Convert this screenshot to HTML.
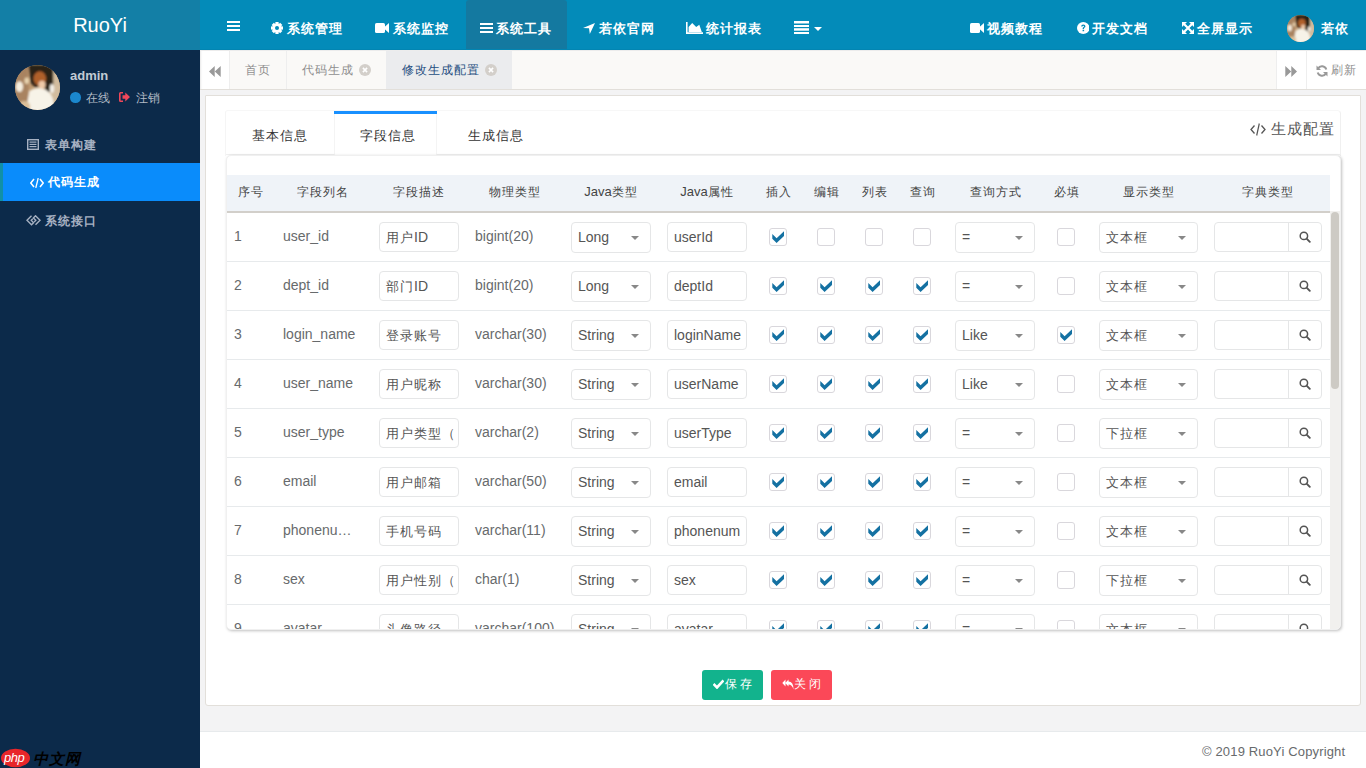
<!DOCTYPE html>
<html><head><meta charset="utf-8"><style>
*{box-sizing:border-box;margin:0;padding:0}
html,body{width:1366px;height:768px;overflow:hidden;font-family:"Liberation Sans",sans-serif;font-size:14px;color:#676a6c;background:#f3f3f4}
i{font-style:normal}
.a{position:absolute}
.c{font-size:13px;letter-spacing:1px;font-weight:500}
.c13{font-size:12px;letter-spacing:1px;font-weight:500}
.c12{font-size:11px;letter-spacing:1px;font-weight:500}
#logo{left:0;top:0;width:200px;height:50px;background:#137fa6;color:#fff;font-size:20px;text-align:center;line-height:50px}
#side{left:0;top:50px;width:200px;height:718px;background:#0c2a4a}
#nav{left:200px;top:0;width:1166px;height:50px;background:#038bb9;border-bottom:1px solid #0285b2}
#tabs{left:200px;top:50px;width:1166px;height:40px;background:#faf9f7;border-bottom:1px solid #e2dfda;border-top:1px solid #ececec}
#panel{left:205px;top:95px;width:1156px;height:611px;background:#fff;border:1px solid #e2dfda;border-radius:1px 1px 3px 3px}
#footer{left:200px;top:731px;width:1166px;height:37px;background:#fff;border-top:1px solid #e7eaec}
.nt{position:absolute;top:22px;height:14px;line-height:14px;color:#fff;font-weight:bold;font-size:13px;letter-spacing:1px;white-space:nowrap}
.mt{position:absolute;height:14px;line-height:14px;color:#a7b1c2;font-weight:bold;font-size:12px;letter-spacing:1px;white-space:nowrap}
.tt{position:absolute;top:12px;height:14px;line-height:14px;color:#8f8f8f;font-size:12px;letter-spacing:1px;white-space:nowrap}
.td{position:absolute;height:16px;line-height:16px;white-space:nowrap;color:#676a6c}
.inp{position:absolute;height:30px;border:1px solid #e5e6e7;border-radius:4px;background:#fff;overflow:hidden;white-space:nowrap;color:#555;padding-left:6px;line-height:28px}
.sel{position:absolute;height:31px;border:1px solid #e5e6e7;border-radius:4px;background:#fff;white-space:nowrap;color:#555;padding-left:6px;line-height:29px}
.car{position:absolute;top:13px;width:0;height:0;border-left:4px solid transparent;border-right:4px solid transparent;border-top:4px solid #888}
.cb{position:absolute;width:18px;height:18px;border:1px solid #d9d7dc;border-radius:3px;background:#fff}
.cb svg{position:absolute;left:-1px;top:-1px}
.th{position:absolute;top:0;height:36px;line-height:36px;text-align:center;color:#444;white-space:nowrap;font-size:13px}
</style></head><body>
<div id="logo" class="a">RuoYi</div>
<div id="side" class="a">
<svg class="a" style="left:15px;top:15px" width="45" height="45" viewBox="0 0 100 100"><defs><clipPath id="cpa"><circle cx="50" cy="50" r="50"/></clipPath><filter id="bla" x="-20%" y="-20%" width="140%" height="140%"><feGaussianBlur stdDeviation="2.5"/></filter></defs><g clip-path="url(#cpa)"><rect width="100" height="100" fill="#c09a72"/><g filter="url(#bla)"><rect x="-5" y="0" width="35" height="110" fill="#a98360"/><rect x="75" y="0" width="30" height="110" fill="#d2bc9e"/><ellipse cx="10" cy="48" rx="8" ry="12" fill="#f6eedf"/><ellipse cx="26" cy="35" rx="5" ry="7" fill="#e8d4b0"/><path d="M30 0 H85 V60 L70 60 L62 45 L45 50 L35 40 Z" fill="#2b2017"/><ellipse cx="55" cy="30" rx="14" ry="16" fill="#b0602c"/><ellipse cx="60" cy="44" rx="8" ry="9" fill="#efc9a8"/><ellipse cx="82" cy="52" rx="5" ry="10" fill="#f4efe6"/><path d="M32 58 Q45 48 60 52 Q78 56 84 75 L90 110 H22 Z" fill="#f7f3e8"/><ellipse cx="20" cy="92" rx="14" ry="12" fill="#dcc09a"/></g></g></svg>
<span class="a" style="left:70px;top:18px;font-size:13px;font-weight:bold;color:#c2cbd4;line-height:16px">admin</span>
<div class="a" style="left:70px;top:42px;width:10.5px;height:10.5px;border-radius:50%;background:#1b87cd"></div>
<span class="mt" style="left:86px;top:41px;font-weight:normal;font-size:12px;letter-spacing:0;color:#b3bcc6">在线</span>
<svg class="a" style="left:119px;top:42px" width="11" height="10" viewBox="0 0 11 10"><path d="M0 1.5 Q0 0 1.5 0 H4 V1.6 H1.6 V8.4 H4 V10 H1.5 Q0 10 0 8.5 Z" fill="#f0475a"/><path d="M3.5 3.3 H6.3 V0.6 L11 5 L6.3 9.4 V6.7 H3.5 Z" fill="#f0475a"/></svg>
<span class="mt" style="left:136px;top:41px;font-weight:normal;font-size:12px;letter-spacing:0;color:#b3bcc6">注销</span>
<div class="a" style="left:0;top:113px;width:200px;height:38px;background:#0a8cfb"></div>
<div class="a" style="left:0;top:113px;width:3px;height:38px;background:#1190a6"></div>
<svg class="a" style="left:27px;top:89px" width="12" height="11" viewBox="0 0 12 11"><rect x="0.7" y="0.7" width="10.6" height="9.6" fill="none" stroke="#a7b1c2" stroke-width="1.4"/><rect x="2.5" y="2.5" width="7" height="1.2" fill="#a7b1c2"/><rect x="2.5" y="4.8" width="7" height="1.2" fill="#a7b1c2"/><rect x="2.5" y="7" width="7" height="1.2" fill="#a7b1c2"/></svg>
<span class="mt" style="left:45px;top:88px">表单构建</span>
<svg class="a" style="left:30px;top:128px" width="14" height="10" viewBox="0 0 14 10"><path d="M4 1 L0.8 5 L4 9" fill="none" stroke="#fff" stroke-width="1.5"/><path d="M10 1 L13.2 5 L10 9" fill="none" stroke="#fff" stroke-width="1.5"/><path d="M8.2 0 L5.8 10" fill="none" stroke="#fff" stroke-width="1.3"/></svg>
<span class="mt" style="left:48px;top:125px;color:#fff">代码生成</span>
<svg class="a" style="left:26px;top:165px" width="15" height="11" viewBox="0 0 15 11"><path d="M5.5 0.8 L1 5.3 L5.5 9.8 L7.6 7.7 L5.2 5.3 L6.8 3.7" fill="none" stroke="#a7b1c2" stroke-width="1.4"/><path d="M9.5 9.8 L14 5.3 L9.5 0.8 L7.4 2.9 L9.8 5.3 L8.2 6.9" fill="none" stroke="#a7b1c2" stroke-width="1.4"/></svg>
<span class="mt" style="left:45px;top:164px">系统接口</span>
<svg class="a" style="left:0px;top:698px" width="84" height="20" viewBox="0 0 84 20"><ellipse cx="15.5" cy="10" rx="14.5" ry="9.3" fill="#e8262a"/><text x="4" y="13.5" font-family="Liberation Sans" font-style="italic" font-size="13" fill="#fff" letter-spacing="-0.5">php</text></svg>
<span class="a" style="left:33px;top:700px;font-size:15px;line-height:18px;color:#000;font-style:italic;font-weight:bold;letter-spacing:1px">中文网</span>
</div>
<div id="nav" class="a">
<svg class="a" style="left:27px;top:21px" width="13" height="10"><rect x="0" y="0" width="13" height="2" fill="#fff"/><rect x="0" y="4" width="13" height="2" fill="#fff"/><rect x="0" y="8" width="13" height="2" fill="#fff"/></svg>
<svg class="a" style="left:71px;top:22px" width="12" height="12" viewBox="0 0 12 12"><g fill="#fff" transform="translate(6 6)"><rect x="-1.6" y="-6" width="3.2" height="12"/><rect x="-1.6" y="-6" width="3.2" height="12" transform="rotate(45)"/><rect x="-1.6" y="-6" width="3.2" height="12" transform="rotate(90)"/><rect x="-1.6" y="-6" width="3.2" height="12" transform="rotate(135)"/><circle r="4.6"/></g><circle cx="6" cy="6" r="2" fill="#038bb9"/></svg>
<span class="nt" style="left:87px">系统管理</span>
<svg class="a" style="left:175px;top:23px" width="14" height="10" viewBox="0 0 14 10"><rect x="0" y="0" width="10" height="10" rx="1.6" fill="#fff"/><path d="M9.5 4 L14 0 V10 L9.5 6 Z" fill="#fff"/></svg>
<span class="nt" style="left:193px">系统监控</span>
<div class="a" style="left:266px;top:0;width:101px;height:49px;background:#1479a0;border-radius:3px 3px 0 0"></div>
<svg class="a" style="left:280px;top:23px" width="13" height="10"><rect x="0" y="0" width="13" height="2" fill="#fff"/><rect x="0" y="4" width="13" height="2" fill="#fff"/><rect x="0" y="8" width="13" height="2" fill="#fff"/></svg>
<span class="nt" style="left:296px">系统工具</span>
<svg class="a" style="left:383px;top:23px" width="12" height="11" viewBox="0 0 12 11"><path d="M12 0 L0 5 L6 5.2 L6.8 11 Z" fill="#fff"/></svg>
<span class="nt" style="left:399px">若依官网</span>
<svg class="a" style="left:486px;top:22px" width="17" height="12" viewBox="0 0 17 12"><path d="M0 0 H1.6 V10.3 H17 V12 H0 Z M2.6 10 V5 L6.2 1 L10.2 5 L13.3 2.8 L15.8 10 Z" fill="#fff"/></svg>
<span class="nt" style="left:506px">统计报表</span>
<svg class="a" style="left:594px;top:21px" width="15" height="13"><rect x="0" y="0" width="15" height="2.5" fill="#fff"/><rect x="0" y="4" width="15" height="2" fill="#fff"/><rect x="0" y="7.2" width="15" height="2.5" fill="#fff"/><rect x="0" y="11" width="15" height="2" fill="#fff"/></svg>
<svg class="a" style="left:614px;top:27px" width="8" height="4"><path d="M0 0 H8 L4 4 Z" fill="#fff"/></svg>
<svg class="a" style="left:770px;top:23px" width="14" height="10" viewBox="0 0 14 10"><rect x="0" y="0" width="10" height="10" rx="1.6" fill="#fff"/><path d="M9.5 4 L14 0 V10 L9.5 6 Z" fill="#fff"/></svg>
<span class="nt" style="left:787px">视频教程</span>
<svg class="a" style="left:876.5px;top:22px" width="12.5" height="12" viewBox="0 0 13 13" preserveAspectRatio="none"><circle cx="6.5" cy="6.5" r="6.5" fill="#fff"/><path d="M4.3 5 Q4.3 2.7 6.6 2.7 Q8.8 2.7 8.8 4.6 Q8.8 5.7 7.6 6.3 Q7.3 6.5 7.3 7.6 H5.8 Q5.8 6 6.8 5.4 Q7.3 5.1 7.3 4.6 Q7.3 4 6.6 4 Q5.8 4 5.8 5 Z" fill="#038bb9"/><rect x="5.8" y="8.4" width="1.6" height="1.6" fill="#038bb9"/></svg>
<span class="nt" style="left:892px">开发文档</span>
<svg class="a" style="left:982px;top:22px" width="12" height="12" viewBox="0 0 12 12"><g fill="#fff"><path d="M0 0 H5 L0 5 Z"/><path d="M12 0 V5 L7 0 Z"/><path d="M0 12 V7 L5 12 Z"/><path d="M12 12 H7 L12 7 Z"/></g><path d="M1.5 1.5 L10.5 10.5 M10.5 1.5 L1.5 10.5" stroke="#fff" stroke-width="2.2"/></svg>
<span class="nt" style="left:997px">全屏显示</span>
<svg class="a" style="left:1087px;top:15px" width="27" height="27" viewBox="0 0 100 100"><defs><clipPath id="cpb"><circle cx="50" cy="50" r="50"/></clipPath><filter id="blb" x="-20%" y="-20%" width="140%" height="140%"><feGaussianBlur stdDeviation="3.5"/></filter></defs><g clip-path="url(#cpb)"><rect width="100" height="100" fill="#c09a72"/><g filter="url(#blb)"><rect x="-5" y="0" width="35" height="110" fill="#a98360"/><rect x="75" y="0" width="30" height="110" fill="#d2bc9e"/><ellipse cx="10" cy="48" rx="8" ry="12" fill="#f6eedf"/><ellipse cx="26" cy="35" rx="5" ry="7" fill="#e8d4b0"/><path d="M30 0 H85 V60 L70 60 L62 45 L45 50 L35 40 Z" fill="#2b2017"/><ellipse cx="55" cy="30" rx="14" ry="16" fill="#b0602c"/><ellipse cx="60" cy="44" rx="8" ry="9" fill="#efc9a8"/><ellipse cx="82" cy="52" rx="5" ry="10" fill="#f4efe6"/><path d="M32 58 Q45 48 60 52 Q78 56 84 75 L90 110 H22 Z" fill="#f7f3e8"/><ellipse cx="20" cy="92" rx="14" ry="12" fill="#dcc09a"/></g></g></svg>
<span class="nt" style="left:1121px">若依</span>
</div>
<div id="tabs" class="a">
<div class="a" style="left:0;top:0;width:30px;height:38px;background:#fff;border-right:1px solid #eee;box-shadow:inset 3px 0 2px -2px #e8e8e8"></div>
<svg class="a" style="left:9px;top:15px" width="12" height="11" viewBox="0 0 12 11"><path d="M0 5.5 L5.7 0 V11 Z M5.8 5.5 L11.7 0 V11 Z" fill="#999"/></svg>
<div class="a" style="left:86px;top:0;width:1px;height:38px;background:#eee"></div>
<span class="tt" style="left:45px">首页</span>
<span class="tt" style="left:102px">代码生成</span>
<svg class="a" style="left:159px;top:13px" width="12" height="12" viewBox="0 0 12 12"><circle cx="6" cy="6" r="6" fill="#d3cfca"/><path d="M3.9 3.9 L8.1 8.1 M8.1 3.9 L3.9 8.1" stroke="#fff" stroke-width="1.6"/></svg>
<div class="a" style="left:186px;top:0;width:126px;height:38px;background:#ebecee"></div>
<span class="tt" style="left:202px;color:#264e80">修改生成配置</span>
<svg class="a" style="left:285px;top:13px" width="12" height="12" viewBox="0 0 12 12"><circle cx="6" cy="6" r="6" fill="#d3cfca"/><path d="M3.9 3.9 L8.1 8.1 M8.1 3.9 L3.9 8.1" stroke="#fff" stroke-width="1.6"/></svg>
<div class="a" style="left:1076px;top:0;width:30px;height:38px;background:#fff;border-left:1px solid #eee"></div>
<svg class="a" style="left:1085px;top:15px" width="12" height="11" viewBox="0 0 12 11"><path d="M12 5.5 L6.3 0 V11 Z M6.2 5.5 L0.3 0 V11 Z" fill="#999"/></svg>
<div class="a" style="left:1106px;top:0;width:60px;height:38px;background:#fff;border-left:1px solid #eee"></div>
<svg class="a" style="left:1116px;top:14px" width="12" height="12" viewBox="0 0 12 12"><path d="M10.3 4.5 A4.6 4.6 0 0 0 2 3.5" fill="none" stroke="#999" stroke-width="2"/><path d="M1.7 7.5 A4.6 4.6 0 0 0 10 8.5" fill="none" stroke="#999" stroke-width="2"/><path d="M0.5 0.5 V5 H5 Z" fill="#999"/><path d="M11.5 11.5 V7 H7 Z" fill="#999"/></svg>
<span class="tt" style="left:1131px">刷新</span>
</div>
<div id="panel" class="a"></div>
<div class="a" style="left:225px;top:110px;width:1116px;height:46px;border-top:1px solid #f7f7f7;border-left:1px solid #f5f5f5;border-right:1px solid #f0f0f0;border-radius:3px 4px 0 0"></div>
<div class="a" style="left:226px;top:110px;width:108px;height:45px;border-bottom:1px solid #f0f0f0"></div>
<div class="a" style="left:437px;top:110px;width:903px;height:45px;border-bottom:1px solid #f0f0f0"></div>
<div class="a" style="left:334px;top:111px;width:103px;height:44px;border-left:1px solid #f4f4f4;border-right:1px solid #f4f4f4"></div>
<div class="a" style="left:334px;top:111px;width:103px;height:3px;background:#1890ff"></div>
<span class="a c" style="left:252px;top:129px;line-height:14px;color:#333">基本信息</span>
<span class="a c" style="left:360px;top:129px;line-height:14px;color:#333">字段信息</span>
<span class="a c" style="left:468px;top:129px;line-height:14px;color:#333">生成信息</span>
<svg class="a" style="left:1250px;top:123px" width="16" height="13" viewBox="0 0 16 13"><path d="M4.5 2.5 L1 6.5 L4.5 10.5 M11.5 2.5 L15 6.5 L11.5 10.5" fill="none" stroke="#555" stroke-width="1.3"/><path d="M9.3 0.5 L6.7 12.5" stroke="#555" stroke-width="1.2"/></svg>
<span class="a" style="left:1271px;top:121px;line-height:16px;color:#555;font-size:15px;letter-spacing:1px">生成配置</span>
<div class="a" style="left:226px;top:155px;width:1115px;height:475px;border-radius:5px;box-shadow:1px 1px 3px rgba(0,0,0,.25);border:1px solid #f0f0f0;overflow:hidden;background:#fff">
<div class="a" style="left:0;top:19px;width:1103px;height:38px;background:#eff3f8;border-bottom:2px solid #d2cfca"></div>
<span class="th" style="left:0px;top:18px;width:48px"><i class="c13">序号</i></span>
<span class="th" style="left:48px;top:18px;width:96px"><i class="c13">字段列名</i></span>
<span class="th" style="left:144px;top:18px;width:96px"><i class="c13">字段描述</i></span>
<span class="th" style="left:240px;top:18px;width:96px"><i class="c13">物理类型</i></span>
<span class="th" style="left:336px;top:18px;width:96px">Java<i class="c13">类型</i></span>
<span class="th" style="left:432px;top:18px;width:96px">Java<i class="c13">属性</i></span>
<span class="th" style="left:528px;top:18px;width:48px"><i class="c13">插入</i></span>
<span class="th" style="left:576px;top:18px;width:48px"><i class="c13">编辑</i></span>
<span class="th" style="left:624px;top:18px;width:48px"><i class="c13">列表</i></span>
<span class="th" style="left:672px;top:18px;width:48px"><i class="c13">查询</i></span>
<span class="th" style="left:720px;top:18px;width:97px"><i class="c13">查询方式</i></span>
<span class="th" style="left:817px;top:18px;width:46px"><i class="c13">必填</i></span>
<span class="th" style="left:863px;top:18px;width:117px"><i class="c13">显示类型</i></span>
<span class="th" style="left:980px;top:18px;width:122px"><i class="c13">字典类型</i></span>
<div class="a" style="left:0;top:105px;width:1103px;height:1px;background:#e7eaec"></div>
<span class="td" style="left:7px;top:72px">1</span>
<span class="td" style="left:56px;top:72px">user_id</span>
<div class="inp" style="left:152px;top:66px;width:80px"><i class="c">用户</i>ID</div>
<span class="td" style="left:248px;top:72px">bigint(20)</span>
<div class="sel" style="left:344px;top:66px;width:80px">Long<i class="car" style="left:59px"></i></div>
<div class="inp" style="left:440px;top:66px;width:80px">userId</div>
<div class="cb" style="left:542px;top:72px"><svg width="18" height="18" viewBox="0 0 18 18"><path d="M3.3 6.1 L7.6 10.3 L15 3.2 V7.9 L7.6 15 L3.3 10.7 Z" fill="#1471a2"/></svg></div>
<div class="cb" style="left:590px;top:72px"></div>
<div class="cb" style="left:638px;top:72px"></div>
<div class="cb" style="left:686px;top:72px"></div>
<div class="sel" style="left:728px;top:66px;width:80px">=<i class="car" style="left:59px"></i></div>
<div class="cb" style="left:830px;top:72px"></div>
<div class="sel" style="left:872px;top:66px;width:99px"><i class="c">文本框</i><i class="car" style="left:78px"></i></div>
<div class="inp" style="left:987px;top:66px;width:108px"></div>
<div class="a" style="left:1061px;top:66px;width:1px;height:30px;background:#e5e6e7"></div>
<svg class="a" style="left:1072px;top:75px" width="12" height="12" viewBox="0 0 12 12"><circle cx="4.9" cy="4.9" r="3.7" fill="none" stroke="#555" stroke-width="1.5"/><path d="M7.6 7.6 L10.8 10.8" stroke="#555" stroke-width="1.9" stroke-linecap="round"/></svg>
<div class="a" style="left:0;top:154px;width:1103px;height:1px;background:#e7eaec"></div>
<span class="td" style="left:7px;top:121px">2</span>
<span class="td" style="left:56px;top:121px">dept_id</span>
<div class="inp" style="left:152px;top:115px;width:80px"><i class="c">部门</i>ID</div>
<span class="td" style="left:248px;top:121px">bigint(20)</span>
<div class="sel" style="left:344px;top:115px;width:80px">Long<i class="car" style="left:59px"></i></div>
<div class="inp" style="left:440px;top:115px;width:80px">deptId</div>
<div class="cb" style="left:542px;top:121px"><svg width="18" height="18" viewBox="0 0 18 18"><path d="M3.3 6.1 L7.6 10.3 L15 3.2 V7.9 L7.6 15 L3.3 10.7 Z" fill="#1471a2"/></svg></div>
<div class="cb" style="left:590px;top:121px"><svg width="18" height="18" viewBox="0 0 18 18"><path d="M3.3 6.1 L7.6 10.3 L15 3.2 V7.9 L7.6 15 L3.3 10.7 Z" fill="#1471a2"/></svg></div>
<div class="cb" style="left:638px;top:121px"><svg width="18" height="18" viewBox="0 0 18 18"><path d="M3.3 6.1 L7.6 10.3 L15 3.2 V7.9 L7.6 15 L3.3 10.7 Z" fill="#1471a2"/></svg></div>
<div class="cb" style="left:686px;top:121px"><svg width="18" height="18" viewBox="0 0 18 18"><path d="M3.3 6.1 L7.6 10.3 L15 3.2 V7.9 L7.6 15 L3.3 10.7 Z" fill="#1471a2"/></svg></div>
<div class="sel" style="left:728px;top:115px;width:80px">=<i class="car" style="left:59px"></i></div>
<div class="cb" style="left:830px;top:121px"></div>
<div class="sel" style="left:872px;top:115px;width:99px"><i class="c">文本框</i><i class="car" style="left:78px"></i></div>
<div class="inp" style="left:987px;top:115px;width:108px"></div>
<div class="a" style="left:1061px;top:115px;width:1px;height:30px;background:#e5e6e7"></div>
<svg class="a" style="left:1072px;top:124px" width="12" height="12" viewBox="0 0 12 12"><circle cx="4.9" cy="4.9" r="3.7" fill="none" stroke="#555" stroke-width="1.5"/><path d="M7.6 7.6 L10.8 10.8" stroke="#555" stroke-width="1.9" stroke-linecap="round"/></svg>
<div class="a" style="left:0;top:203px;width:1103px;height:1px;background:#e7eaec"></div>
<span class="td" style="left:7px;top:170px">3</span>
<span class="td" style="left:56px;top:170px">login_name</span>
<div class="inp" style="left:152px;top:164px;width:80px"><i class="c">登录账号</i></div>
<span class="td" style="left:248px;top:170px">varchar(30)</span>
<div class="sel" style="left:344px;top:164px;width:80px">String<i class="car" style="left:59px"></i></div>
<div class="inp" style="left:440px;top:164px;width:80px">loginName</div>
<div class="cb" style="left:542px;top:170px"><svg width="18" height="18" viewBox="0 0 18 18"><path d="M3.3 6.1 L7.6 10.3 L15 3.2 V7.9 L7.6 15 L3.3 10.7 Z" fill="#1471a2"/></svg></div>
<div class="cb" style="left:590px;top:170px"><svg width="18" height="18" viewBox="0 0 18 18"><path d="M3.3 6.1 L7.6 10.3 L15 3.2 V7.9 L7.6 15 L3.3 10.7 Z" fill="#1471a2"/></svg></div>
<div class="cb" style="left:638px;top:170px"><svg width="18" height="18" viewBox="0 0 18 18"><path d="M3.3 6.1 L7.6 10.3 L15 3.2 V7.9 L7.6 15 L3.3 10.7 Z" fill="#1471a2"/></svg></div>
<div class="cb" style="left:686px;top:170px"><svg width="18" height="18" viewBox="0 0 18 18"><path d="M3.3 6.1 L7.6 10.3 L15 3.2 V7.9 L7.6 15 L3.3 10.7 Z" fill="#1471a2"/></svg></div>
<div class="sel" style="left:728px;top:164px;width:80px">Like<i class="car" style="left:59px"></i></div>
<div class="cb" style="left:830px;top:170px"><svg width="18" height="18" viewBox="0 0 18 18"><path d="M3.3 6.1 L7.6 10.3 L15 3.2 V7.9 L7.6 15 L3.3 10.7 Z" fill="#1471a2"/></svg></div>
<div class="sel" style="left:872px;top:164px;width:99px"><i class="c">文本框</i><i class="car" style="left:78px"></i></div>
<div class="inp" style="left:987px;top:164px;width:108px"></div>
<div class="a" style="left:1061px;top:164px;width:1px;height:30px;background:#e5e6e7"></div>
<svg class="a" style="left:1072px;top:173px" width="12" height="12" viewBox="0 0 12 12"><circle cx="4.9" cy="4.9" r="3.7" fill="none" stroke="#555" stroke-width="1.5"/><path d="M7.6 7.6 L10.8 10.8" stroke="#555" stroke-width="1.9" stroke-linecap="round"/></svg>
<div class="a" style="left:0;top:252px;width:1103px;height:1px;background:#e7eaec"></div>
<span class="td" style="left:7px;top:219px">4</span>
<span class="td" style="left:56px;top:219px">user_name</span>
<div class="inp" style="left:152px;top:213px;width:80px"><i class="c">用户昵称</i></div>
<span class="td" style="left:248px;top:219px">varchar(30)</span>
<div class="sel" style="left:344px;top:213px;width:80px">String<i class="car" style="left:59px"></i></div>
<div class="inp" style="left:440px;top:213px;width:80px">userName</div>
<div class="cb" style="left:542px;top:219px"><svg width="18" height="18" viewBox="0 0 18 18"><path d="M3.3 6.1 L7.6 10.3 L15 3.2 V7.9 L7.6 15 L3.3 10.7 Z" fill="#1471a2"/></svg></div>
<div class="cb" style="left:590px;top:219px"><svg width="18" height="18" viewBox="0 0 18 18"><path d="M3.3 6.1 L7.6 10.3 L15 3.2 V7.9 L7.6 15 L3.3 10.7 Z" fill="#1471a2"/></svg></div>
<div class="cb" style="left:638px;top:219px"><svg width="18" height="18" viewBox="0 0 18 18"><path d="M3.3 6.1 L7.6 10.3 L15 3.2 V7.9 L7.6 15 L3.3 10.7 Z" fill="#1471a2"/></svg></div>
<div class="cb" style="left:686px;top:219px"><svg width="18" height="18" viewBox="0 0 18 18"><path d="M3.3 6.1 L7.6 10.3 L15 3.2 V7.9 L7.6 15 L3.3 10.7 Z" fill="#1471a2"/></svg></div>
<div class="sel" style="left:728px;top:213px;width:80px">Like<i class="car" style="left:59px"></i></div>
<div class="cb" style="left:830px;top:219px"></div>
<div class="sel" style="left:872px;top:213px;width:99px"><i class="c">文本框</i><i class="car" style="left:78px"></i></div>
<div class="inp" style="left:987px;top:213px;width:108px"></div>
<div class="a" style="left:1061px;top:213px;width:1px;height:30px;background:#e5e6e7"></div>
<svg class="a" style="left:1072px;top:222px" width="12" height="12" viewBox="0 0 12 12"><circle cx="4.9" cy="4.9" r="3.7" fill="none" stroke="#555" stroke-width="1.5"/><path d="M7.6 7.6 L10.8 10.8" stroke="#555" stroke-width="1.9" stroke-linecap="round"/></svg>
<div class="a" style="left:0;top:301px;width:1103px;height:1px;background:#e7eaec"></div>
<span class="td" style="left:7px;top:268px">5</span>
<span class="td" style="left:56px;top:268px">user_type</span>
<div class="inp" style="left:152px;top:262px;width:80px"><i class="c">用户类型（</i></div>
<span class="td" style="left:248px;top:268px">varchar(2)</span>
<div class="sel" style="left:344px;top:262px;width:80px">String<i class="car" style="left:59px"></i></div>
<div class="inp" style="left:440px;top:262px;width:80px">userType</div>
<div class="cb" style="left:542px;top:268px"><svg width="18" height="18" viewBox="0 0 18 18"><path d="M3.3 6.1 L7.6 10.3 L15 3.2 V7.9 L7.6 15 L3.3 10.7 Z" fill="#1471a2"/></svg></div>
<div class="cb" style="left:590px;top:268px"><svg width="18" height="18" viewBox="0 0 18 18"><path d="M3.3 6.1 L7.6 10.3 L15 3.2 V7.9 L7.6 15 L3.3 10.7 Z" fill="#1471a2"/></svg></div>
<div class="cb" style="left:638px;top:268px"><svg width="18" height="18" viewBox="0 0 18 18"><path d="M3.3 6.1 L7.6 10.3 L15 3.2 V7.9 L7.6 15 L3.3 10.7 Z" fill="#1471a2"/></svg></div>
<div class="cb" style="left:686px;top:268px"><svg width="18" height="18" viewBox="0 0 18 18"><path d="M3.3 6.1 L7.6 10.3 L15 3.2 V7.9 L7.6 15 L3.3 10.7 Z" fill="#1471a2"/></svg></div>
<div class="sel" style="left:728px;top:262px;width:80px">=<i class="car" style="left:59px"></i></div>
<div class="cb" style="left:830px;top:268px"></div>
<div class="sel" style="left:872px;top:262px;width:99px"><i class="c">下拉框</i><i class="car" style="left:78px"></i></div>
<div class="inp" style="left:987px;top:262px;width:108px"></div>
<div class="a" style="left:1061px;top:262px;width:1px;height:30px;background:#e5e6e7"></div>
<svg class="a" style="left:1072px;top:271px" width="12" height="12" viewBox="0 0 12 12"><circle cx="4.9" cy="4.9" r="3.7" fill="none" stroke="#555" stroke-width="1.5"/><path d="M7.6 7.6 L10.8 10.8" stroke="#555" stroke-width="1.9" stroke-linecap="round"/></svg>
<div class="a" style="left:0;top:350px;width:1103px;height:1px;background:#e7eaec"></div>
<span class="td" style="left:7px;top:317px">6</span>
<span class="td" style="left:56px;top:317px">email</span>
<div class="inp" style="left:152px;top:311px;width:80px"><i class="c">用户邮箱</i></div>
<span class="td" style="left:248px;top:317px">varchar(50)</span>
<div class="sel" style="left:344px;top:311px;width:80px">String<i class="car" style="left:59px"></i></div>
<div class="inp" style="left:440px;top:311px;width:80px">email</div>
<div class="cb" style="left:542px;top:317px"><svg width="18" height="18" viewBox="0 0 18 18"><path d="M3.3 6.1 L7.6 10.3 L15 3.2 V7.9 L7.6 15 L3.3 10.7 Z" fill="#1471a2"/></svg></div>
<div class="cb" style="left:590px;top:317px"><svg width="18" height="18" viewBox="0 0 18 18"><path d="M3.3 6.1 L7.6 10.3 L15 3.2 V7.9 L7.6 15 L3.3 10.7 Z" fill="#1471a2"/></svg></div>
<div class="cb" style="left:638px;top:317px"><svg width="18" height="18" viewBox="0 0 18 18"><path d="M3.3 6.1 L7.6 10.3 L15 3.2 V7.9 L7.6 15 L3.3 10.7 Z" fill="#1471a2"/></svg></div>
<div class="cb" style="left:686px;top:317px"><svg width="18" height="18" viewBox="0 0 18 18"><path d="M3.3 6.1 L7.6 10.3 L15 3.2 V7.9 L7.6 15 L3.3 10.7 Z" fill="#1471a2"/></svg></div>
<div class="sel" style="left:728px;top:311px;width:80px">=<i class="car" style="left:59px"></i></div>
<div class="cb" style="left:830px;top:317px"></div>
<div class="sel" style="left:872px;top:311px;width:99px"><i class="c">文本框</i><i class="car" style="left:78px"></i></div>
<div class="inp" style="left:987px;top:311px;width:108px"></div>
<div class="a" style="left:1061px;top:311px;width:1px;height:30px;background:#e5e6e7"></div>
<svg class="a" style="left:1072px;top:320px" width="12" height="12" viewBox="0 0 12 12"><circle cx="4.9" cy="4.9" r="3.7" fill="none" stroke="#555" stroke-width="1.5"/><path d="M7.6 7.6 L10.8 10.8" stroke="#555" stroke-width="1.9" stroke-linecap="round"/></svg>
<div class="a" style="left:0;top:399px;width:1103px;height:1px;background:#e7eaec"></div>
<span class="td" style="left:7px;top:366px">7</span>
<span class="td" style="left:56px;top:366px">phonenu…</span>
<div class="inp" style="left:152px;top:360px;width:80px"><i class="c">手机号码</i></div>
<span class="td" style="left:248px;top:366px">varchar(11)</span>
<div class="sel" style="left:344px;top:360px;width:80px">String<i class="car" style="left:59px"></i></div>
<div class="inp" style="left:440px;top:360px;width:80px">phonenum</div>
<div class="cb" style="left:542px;top:366px"><svg width="18" height="18" viewBox="0 0 18 18"><path d="M3.3 6.1 L7.6 10.3 L15 3.2 V7.9 L7.6 15 L3.3 10.7 Z" fill="#1471a2"/></svg></div>
<div class="cb" style="left:590px;top:366px"><svg width="18" height="18" viewBox="0 0 18 18"><path d="M3.3 6.1 L7.6 10.3 L15 3.2 V7.9 L7.6 15 L3.3 10.7 Z" fill="#1471a2"/></svg></div>
<div class="cb" style="left:638px;top:366px"><svg width="18" height="18" viewBox="0 0 18 18"><path d="M3.3 6.1 L7.6 10.3 L15 3.2 V7.9 L7.6 15 L3.3 10.7 Z" fill="#1471a2"/></svg></div>
<div class="cb" style="left:686px;top:366px"><svg width="18" height="18" viewBox="0 0 18 18"><path d="M3.3 6.1 L7.6 10.3 L15 3.2 V7.9 L7.6 15 L3.3 10.7 Z" fill="#1471a2"/></svg></div>
<div class="sel" style="left:728px;top:360px;width:80px">=<i class="car" style="left:59px"></i></div>
<div class="cb" style="left:830px;top:366px"></div>
<div class="sel" style="left:872px;top:360px;width:99px"><i class="c">文本框</i><i class="car" style="left:78px"></i></div>
<div class="inp" style="left:987px;top:360px;width:108px"></div>
<div class="a" style="left:1061px;top:360px;width:1px;height:30px;background:#e5e6e7"></div>
<svg class="a" style="left:1072px;top:369px" width="12" height="12" viewBox="0 0 12 12"><circle cx="4.9" cy="4.9" r="3.7" fill="none" stroke="#555" stroke-width="1.5"/><path d="M7.6 7.6 L10.8 10.8" stroke="#555" stroke-width="1.9" stroke-linecap="round"/></svg>
<div class="a" style="left:0;top:448px;width:1103px;height:1px;background:#e7eaec"></div>
<span class="td" style="left:7px;top:415px">8</span>
<span class="td" style="left:56px;top:415px">sex</span>
<div class="inp" style="left:152px;top:409px;width:80px"><i class="c">用户性别（</i></div>
<span class="td" style="left:248px;top:415px">char(1)</span>
<div class="sel" style="left:344px;top:409px;width:80px">String<i class="car" style="left:59px"></i></div>
<div class="inp" style="left:440px;top:409px;width:80px">sex</div>
<div class="cb" style="left:542px;top:415px"><svg width="18" height="18" viewBox="0 0 18 18"><path d="M3.3 6.1 L7.6 10.3 L15 3.2 V7.9 L7.6 15 L3.3 10.7 Z" fill="#1471a2"/></svg></div>
<div class="cb" style="left:590px;top:415px"><svg width="18" height="18" viewBox="0 0 18 18"><path d="M3.3 6.1 L7.6 10.3 L15 3.2 V7.9 L7.6 15 L3.3 10.7 Z" fill="#1471a2"/></svg></div>
<div class="cb" style="left:638px;top:415px"><svg width="18" height="18" viewBox="0 0 18 18"><path d="M3.3 6.1 L7.6 10.3 L15 3.2 V7.9 L7.6 15 L3.3 10.7 Z" fill="#1471a2"/></svg></div>
<div class="cb" style="left:686px;top:415px"><svg width="18" height="18" viewBox="0 0 18 18"><path d="M3.3 6.1 L7.6 10.3 L15 3.2 V7.9 L7.6 15 L3.3 10.7 Z" fill="#1471a2"/></svg></div>
<div class="sel" style="left:728px;top:409px;width:80px">=<i class="car" style="left:59px"></i></div>
<div class="cb" style="left:830px;top:415px"></div>
<div class="sel" style="left:872px;top:409px;width:99px"><i class="c">下拉框</i><i class="car" style="left:78px"></i></div>
<div class="inp" style="left:987px;top:409px;width:108px"></div>
<div class="a" style="left:1061px;top:409px;width:1px;height:30px;background:#e5e6e7"></div>
<svg class="a" style="left:1072px;top:418px" width="12" height="12" viewBox="0 0 12 12"><circle cx="4.9" cy="4.9" r="3.7" fill="none" stroke="#555" stroke-width="1.5"/><path d="M7.6 7.6 L10.8 10.8" stroke="#555" stroke-width="1.9" stroke-linecap="round"/></svg>
<div class="a" style="left:0;top:497px;width:1103px;height:1px;background:#e7eaec"></div>
<span class="td" style="left:7px;top:464px">9</span>
<span class="td" style="left:56px;top:464px">avatar</span>
<div class="inp" style="left:152px;top:458px;width:80px"><i class="c">头像路径</i></div>
<span class="td" style="left:248px;top:464px">varchar(100)</span>
<div class="sel" style="left:344px;top:458px;width:80px">String<i class="car" style="left:59px"></i></div>
<div class="inp" style="left:440px;top:458px;width:80px">avatar</div>
<div class="cb" style="left:542px;top:464px"><svg width="18" height="18" viewBox="0 0 18 18"><path d="M3.3 6.1 L7.6 10.3 L15 3.2 V7.9 L7.6 15 L3.3 10.7 Z" fill="#1471a2"/></svg></div>
<div class="cb" style="left:590px;top:464px"><svg width="18" height="18" viewBox="0 0 18 18"><path d="M3.3 6.1 L7.6 10.3 L15 3.2 V7.9 L7.6 15 L3.3 10.7 Z" fill="#1471a2"/></svg></div>
<div class="cb" style="left:638px;top:464px"><svg width="18" height="18" viewBox="0 0 18 18"><path d="M3.3 6.1 L7.6 10.3 L15 3.2 V7.9 L7.6 15 L3.3 10.7 Z" fill="#1471a2"/></svg></div>
<div class="cb" style="left:686px;top:464px"><svg width="18" height="18" viewBox="0 0 18 18"><path d="M3.3 6.1 L7.6 10.3 L15 3.2 V7.9 L7.6 15 L3.3 10.7 Z" fill="#1471a2"/></svg></div>
<div class="sel" style="left:728px;top:458px;width:80px">=<i class="car" style="left:59px"></i></div>
<div class="cb" style="left:830px;top:464px"></div>
<div class="sel" style="left:872px;top:458px;width:99px"><i class="c">文本框</i><i class="car" style="left:78px"></i></div>
<div class="inp" style="left:987px;top:458px;width:108px"></div>
<div class="a" style="left:1061px;top:458px;width:1px;height:30px;background:#e5e6e7"></div>
<svg class="a" style="left:1072px;top:467px" width="12" height="12" viewBox="0 0 12 12"><circle cx="4.9" cy="4.9" r="3.7" fill="none" stroke="#555" stroke-width="1.5"/><path d="M7.6 7.6 L10.8 10.8" stroke="#555" stroke-width="1.9" stroke-linecap="round"/></svg>
<div class="a" style="left:1103px;top:55px;width:10px;height:419px;background:#f1f0ee"></div>
<div class="a" style="left:1104px;top:56px;width:8px;height:177px;background:#cdcac4;border-radius:4px"></div>
</div>
<div class="a" style="left:702px;top:670px;width:61px;height:30px;background:#12b38d;border-radius:3px"></div>
<svg class="a" style="left:713px;top:679px" width="11" height="10" viewBox="0 0 11 10"><path d="M0.5 5 L4 8.5 L10.5 1.5" fill="none" stroke="#fff" stroke-width="2.6"/></svg>
<span class="a" style="left:725px;top:677px;font-size:12px;line-height:14px;color:#fff">保</span><span class="a" style="left:740px;top:677px;font-size:12px;line-height:14px;color:#fff">存</span>
<div class="a" style="left:771px;top:670px;width:61px;height:30px;background:#fb4858;border-radius:3px"></div>
<svg class="a" style="left:782px;top:679px" width="12" height="11" viewBox="0 0 12 11"><path d="M3.5 0.5 L0.3 4 L3.5 7.5 Z M6.5 0.5 L3.3 4 L6.5 7.5 V5.5 Q10 5.5 11.5 10.5 Q11.5 2.5 6.5 2.5 Z" fill="#fff"/></svg>
<span class="a" style="left:794px;top:677px;font-size:12px;line-height:14px;color:#fff">关</span><span class="a" style="left:809px;top:677px;font-size:12px;line-height:14px;color:#fff">闭</span>
<div id="footer" class="a"><span class="a" style="left:1002px;top:12px;font-size:13px;line-height:16px;letter-spacing:0.15px;color:#676a6c">&copy; 2019 RuoYi Copyright</span></div>
</body></html>
